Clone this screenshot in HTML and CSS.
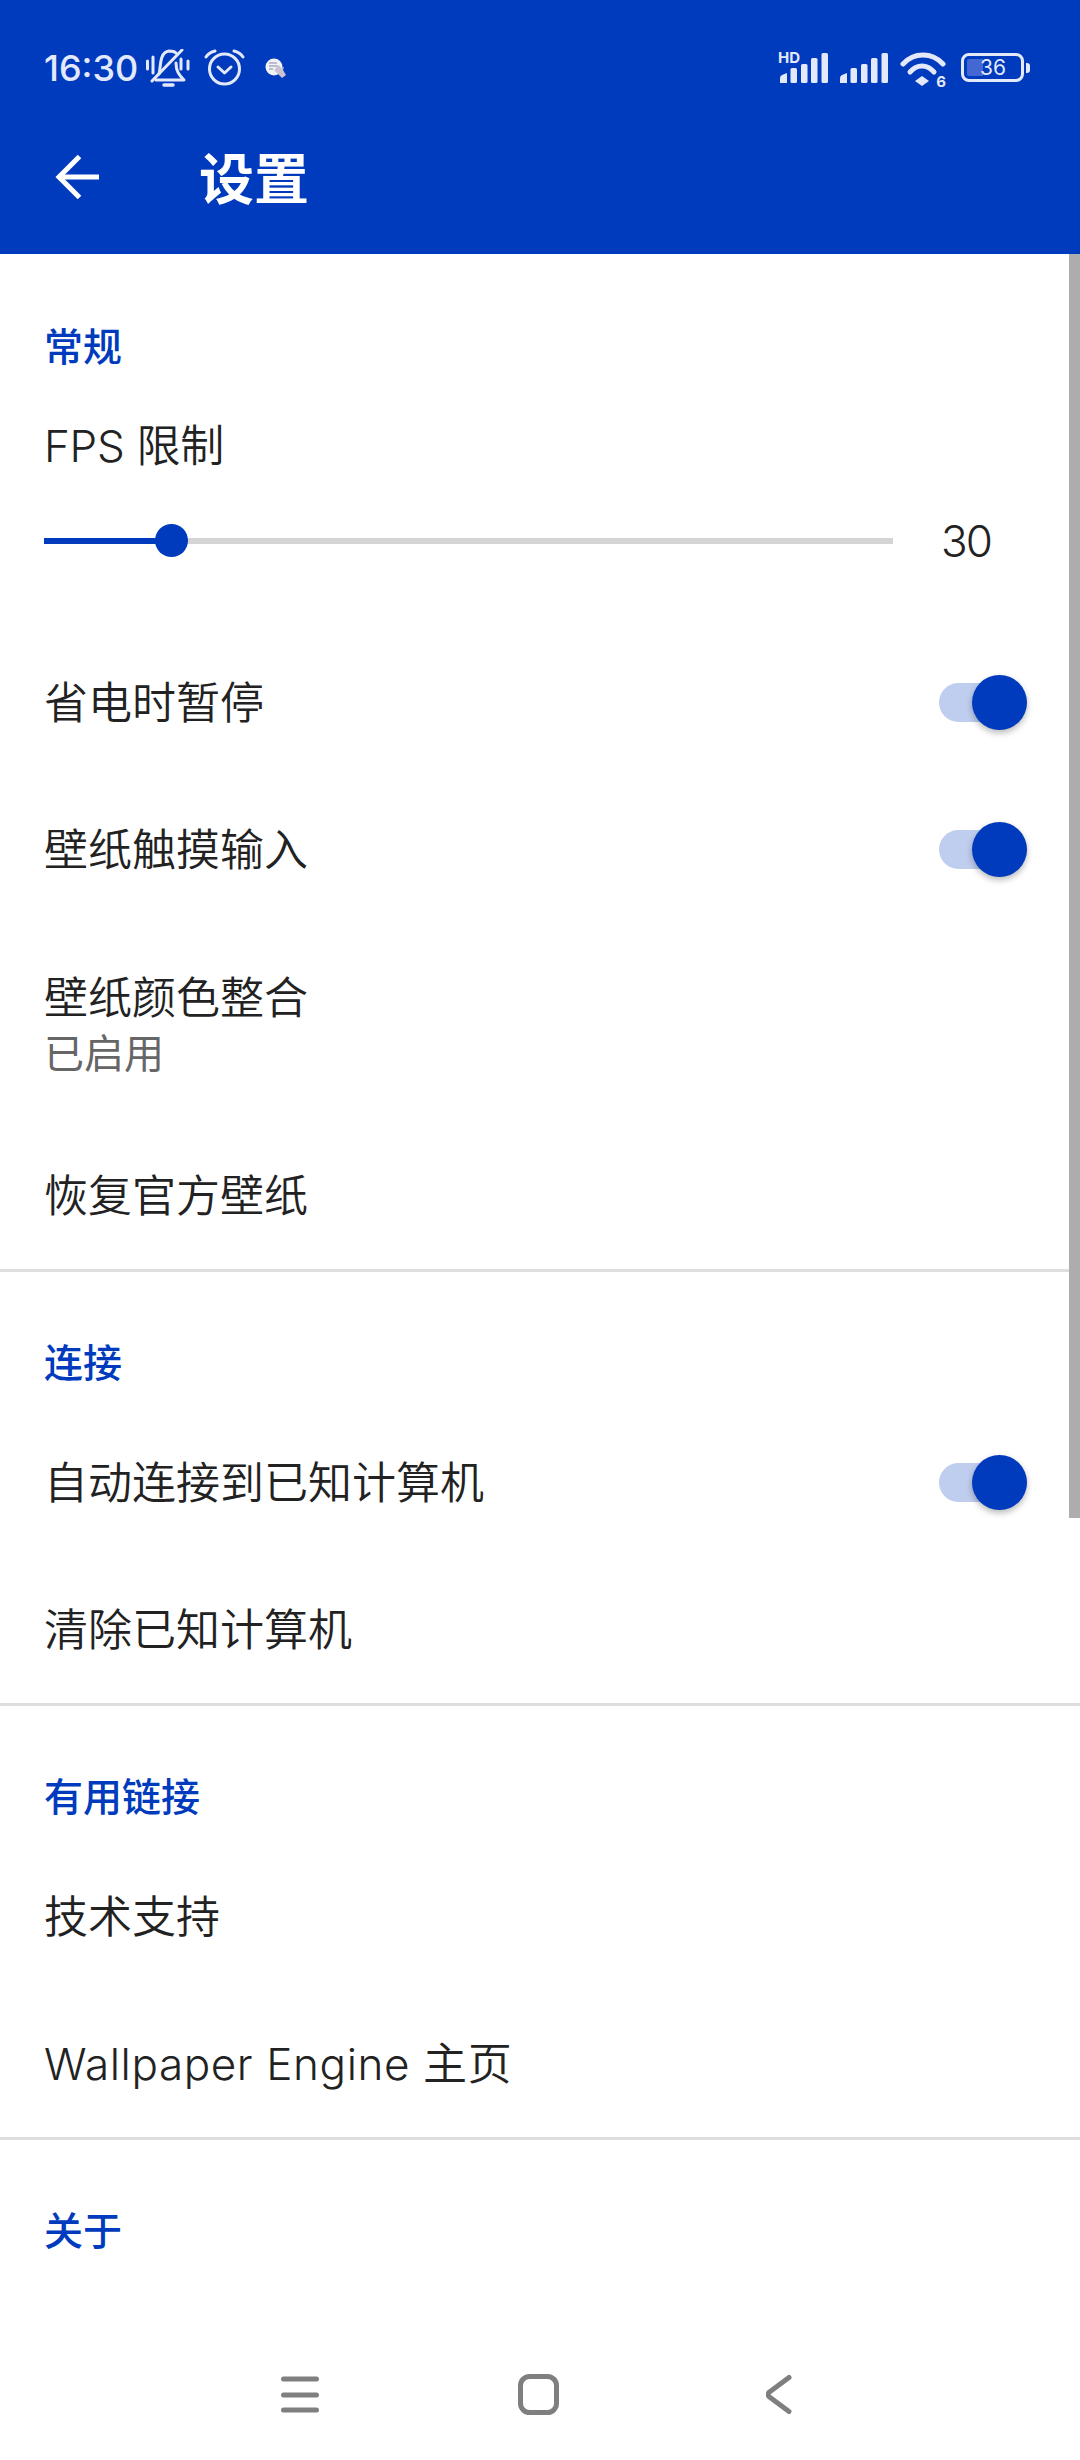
FILE: index.html
```html
<!DOCTYPE html>
<html lang="zh-CN">
<head>
<meta charset="utf-8" />
<meta name="viewport" content="width=device-width, initial-scale=1"/>
<link rel="stylesheet" href="styles.css">
</head>
<body>
<div class="screen">
	<header class="appbar">
		<div class="statusbar">
			<div class="status-left">
				<span class="clock">16:30</span>
				<svg class="ic-bell" width="44" height="38" viewBox="0 0 44 38" fill="none" stroke="#e3e9fb" stroke-width="3" stroke-linecap="round" stroke-linejoin="round">
					<path d="M13 25c2-6 0-22 10-23 3 0 6 1 7 2"/>
					<path d="M30 14c0 8 3 12 8 17H10"/>
					<path d="M6 32 36 1"/>
					<path d="M1.500 12v8M7 8v16M35 10v10M42 12v8"/>
					<path d="M18 36h9" stroke-width="3.500"/>
				</svg>
				<svg class="ic-alarm" width="41" height="38" viewBox="0 0 41 38" fill="none" stroke="#e3e9fb" stroke-width="3" stroke-linecap="round" stroke-linejoin="round">
					<circle cx="20.500" cy="20" r="15"/>
					<path d="M14 18l6.500 6 6.500-6"/>
					<path d="M2 8c2-3 5-5 9-6M39 8c-2-3-5-5-9-6"/>
				</svg>
				<svg class="ic-app" width="21" height="20" viewBox="0 0 21 20">
					<circle cx="9" cy="9" r="8.500" fill="#f2f2f6"/>
					<path d="M4 5h8M4 8h9M4 11h4" stroke="#7f88ad" stroke-width="1.200" fill="none"/>
					<path d="M9 12l5-5 2 3 3-1-1 3 3 5-4 3z" fill="#c9c4cf"/>
				</svg>
			</div>
			<div class="status-right">
				<div class="signal-hd">
					<span class="hd">HD</span>
					<svg class="bars" width="48" height="30" viewBox="0 0 48 30" fill="#e3e9fb">
						<path d="M0 30v-5q0-2 2-3l5-2v10z"/>
						<rect x="10.500" y="15" width="6.500" height="15" rx="1.500"/>
						<rect x="21" y="11" width="6.500" height="19" rx="1.500"/>
						<rect x="31" y="5" width="6.500" height="25" rx="1.500"/>
						<rect x="41.500" y="0" width="6.500" height="30" rx="1.500"/>
					</svg>
				</div>
				<svg class="bars" width="48" height="30" viewBox="0 0 48 30" fill="#e3e9fb">
					<path d="M0 30v-5q0-2 2-3l5-2v10z"/>
					<rect x="10.500" y="15" width="6.500" height="15" rx="1.500"/>
					<rect x="21" y="11" width="6.500" height="19" rx="1.500"/>
					<rect x="31" y="5" width="6.500" height="25" rx="1.500"/>
					<rect x="41.500" y="0" width="6.500" height="30" rx="1.500"/>
				</svg>
				<div class="wifi">
					<svg width="46" height="34" viewBox="0 0 46 34" fill="none" stroke="#e3e9fb" stroke-width="5" stroke-linecap="round">
						<path d="M3 12c11-12 29-12 40 0"/>
						<path d="M10 20c7-8 17-8 24 0"/>
						<path d="M22 24l7 5-7 5-7-5z" fill="#e3e9fb" stroke="none"/>
					</svg>
					<span class="wifi-six">6</span>
				</div>
				<div class="battery">
					<div class="battery-body">
						<div class="battery-fill" style="width:16px"></div>
						<span class="battery-num">36</span>
					</div>
					<div class="battery-tip"></div>
				</div>
			</div>
		</div>
		<div class="toolbar">
			<svg class="ic-back" width="44" height="44" viewBox="0 0 44 44" fill="none" stroke="#fff" stroke-width="5">
				<path d="M44 22H4"/>
				<path d="M24.500 1.500 4 22l20.500 20.500"/>
			</svg>
			<h1 class="title">设置</h1>
		</div>
	</header>

	<main class="content">
		<section class="group">
			<h2 class="group-label">常规</h2>
			<div class="fps-label">FPS 限制</div>
			<div class="slider-row">
				<div class="slider">
					<div class="slider-on" style="width:127px"></div>
					<div class="slider-knob"></div>
				</div>
				<span class="slider-val">30</span>
			</div>
			<div class="row row-first"><span class="row-text">省电时暂停</span><span class="switch"></span></div>
			<div class="row"><span class="row-text">壁纸触摸输入</span><span class="switch"></span></div>
			<div class="row row-two">
				<div><div class="row-text">壁纸颜色整合</div><div class="row-sub">已启用</div></div>
			</div>
			<div class="row"><span class="row-text">恢复官方壁纸</span></div>
		</section>
		<section class="group">
			<h2 class="group-label">连接</h2>
			<div class="row"><span class="row-text">自动连接到已知计算机</span><span class="switch"></span></div>
			<div class="row"><span class="row-text">清除已知计算机</span></div>
		</section>
		<section class="group">
			<h2 class="group-label">有用链接</h2>
			<div class="row"><span class="row-text">技术支持</span></div>
			<div class="row"><span class="row-text row-latin">Wallpaper Engine 主页</span></div>
		</section>
		<section class="group group-last">
			<h2 class="group-label">关于</h2>
		</section>
		<div class="scrollbar"></div>
	</main>

	<nav class="navbar">
		<svg width="38" height="41" viewBox="0 0 38 41" fill="none" stroke="#7f7f7f" stroke-width="5" stroke-linecap="round">
			<path d="M2.500 5h33M2.500 21h33M2.500 36h33"/>
		</svg>
		<svg width="41" height="41" viewBox="0 0 41 41" fill="none" stroke="#7f7f7f" stroke-width="5">
			<rect x="2.500" y="2.500" width="36" height="36" rx="9"/>
		</svg>
		<svg class="nav-back" width="26" height="41" viewBox="0 0 26 41" fill="none" stroke="#7f7f7f" stroke-width="5" stroke-linecap="round" stroke-linejoin="round">
			<path d="M23 3.500 3.500 18q-3 2.500 0 5L23 37.500"/>
		</svg>
	</nav>
</div>
</body>
</html>
```

FILE: styles.css
```css
* {box-sizing: border-box;}
html, body {margin: 0; padding: 0;}
body {background: #fff; font-family: Inter, "Noto Sans CJK SC", sans-serif; color: #222;}

.screen {width: 1080px; height: 2460px; display: flex; flex-direction: column; overflow: hidden; position: relative;}

/* top bar */
.appbar {height: 254px; background: #003bbd; flex: none;}
.statusbar {height: 136px; padding: 44px 50px 0 44px; display: flex; justify-content: space-between; align-items: flex-start; color: #e3e9fb;}
.status-left {display: flex; align-items: center; height: 48px;}
.clock {font-size: 36px; line-height: 48px; font-weight: 500;}
.ic-bell {margin-left: 8px;}
.ic-alarm {margin-left: 14px;}
.ic-app {margin-left: 20px;}
.status-right {display: flex; align-items: flex-start; margin-top: 9px;}
.bars {display: block;}
.signal-hd {position: relative; width: 48px; height: 30px; margin-right: 12px;}
.hd {position: absolute; left: -2px; top: -3px; font-size: 15px; line-height: 15px; font-weight: 700;}
.wifi {position: relative; width: 46px; height: 32px; margin: -1px 0 0 12px;}
.wifi svg {display: block;}
.wifi-six {position: absolute; right: 0; bottom: -5px; font-size: 15px; line-height: 15px; font-weight: 700;}
.battery {display: flex; align-items: center; gap: 2px; margin-left: 15px;}
.battery-body {width: 63px; height: 29px; border: 3px solid #e3e9fb; border-radius: 8px; position: relative; padding: 3px;}
.battery-fill {height: 100%; background: #4368d3; border-radius: 2px 0 0 2px;}
.battery-num {position: absolute; left: 1px; right: 0; top: -2px; text-align: center; font-size: 21px; line-height: 27px;}
.battery-tip {width: 4px; height: 10px; background: #e3e9fb; border-radius: 0 3px 3px 0;}

.toolbar {height: 118px; display: flex; align-items: center; padding: 0 0 36px 55px;}
.title {margin: 4px 0 0 100px; font-size: 55px; line-height: 70px; font-weight: 700; color: #fff;}

/* list */
.content {flex: 1; position: relative; overflow: hidden;}
.group {border-bottom: 3px solid #dedede;}
.group-last {border-bottom: 0;}
.group-label {margin: 0; height: 137px; padding: 64px 44px 0; font-size: 39px; line-height: 54px; font-weight: 500; color: #003bbd;}
.group:first-child .group-label {height: 160px; padding-top: 66px;}

.fps-label {height: 70px; margin-top: -1px; padding: 0 44px; font-size: 44px; line-height: 66px; letter-spacing: -0.3px; font-weight: 350;}
.slider-row {display: flex; align-items: center; height: 66px; margin-top: 25px; padding: 0 88px 0 44px;}
.slider {flex: 1; height: 6px; background: #d4d4d4; position: relative;}
.slider-on {height: 6px; background: #003bbd;}
.slider-knob {position: absolute; left: 111px; top: -14px; width: 33px; height: 33px; border-radius: 50%; background: #003bbd;}
.slider-val {width: 51px; margin-left: 48px; font-size: 44px; line-height: 60px; letter-spacing: -2px; font-weight: 350;}

.row {height: 147px; padding: 0 53px 0 44px; display: flex; align-items: center; justify-content: space-between;}
.row-first {margin-top: 55px;}
.row-two {height: 199px; padding-top: 3px;}
.row-text {font-size: 44px; line-height: 58px; padding-top: 1px; font-weight: 350;}
.row-latin {letter-spacing: 0.6px;}
.row-sub {font-size: 40px; line-height: 54px; color: #666;}

.switch {width: 88px; height: 39px; background: #bfcdee; border-radius: 20px; position: relative;}
.switch::after {content: ""; position: absolute; right: 0; top: -8px; width: 55px; height: 55px; border-radius: 50%; background: #003bbd; box-shadow: 0 3px 6px rgba(0,0,0,.28);}

.scrollbar {position: absolute; right: 0; top: 0; width: 11px; height: 1264px; background: #adadad;}

/* bottom nav */
.navbar {position: absolute; left: 0; right: 0; bottom: 0; height: 110px; background: #fff; display: flex; align-items: flex-start; padding: 24px 0 0 281px; gap: 199px;}
.nav-back {margin-left: 8px;}
```
